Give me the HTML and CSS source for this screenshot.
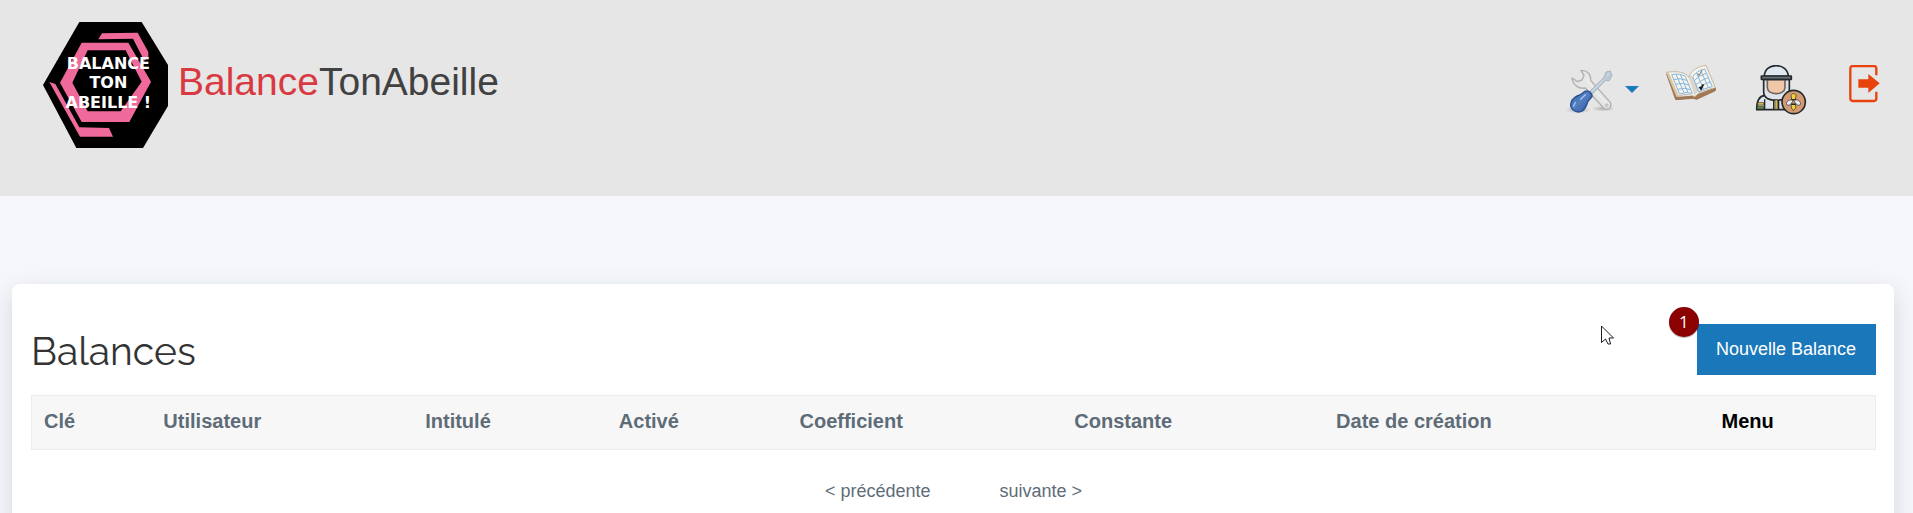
FILE: index.html
```
<!DOCTYPE html>
<html lang="fr">
<head>
<meta charset="utf-8">
<title>BalanceTonAbeille</title>
<link rel="stylesheet" href="styles.css">
</head>
<body>
<header class="topbar">
  <a class="brand" href="#">
    <svg class="brand-logo" viewBox="39 36 375 378" role="img" aria-label="Logo">
      <path d="M39 225 148 36H335L414 165V288L339 414H139Z" fill="#000"/>
      <path fill-rule="evenodd" d="M90 218 155 98H295L363 215 298 336H155ZM127 218 173 304H272L335 215 287 121H173Z" fill="#f0699b"/>
      <path d="M205 88 216 70 323 68 355 126V142L343 152 309 86ZM58 216 76 222 148 352 237 354 249 380H150Z" fill="#f0699b"/>
      <g class="logo-text">
        <text x="235" y="177">BALANCE</text>
        <text x="235" y="235">TON</text>
        <text x="235" y="294">ABEILLE !</text>
      </g>
    </svg>
    <span class="brand-name"><span class="brand-accent">Balance</span>TonAbeille</span>
  </a>
  <nav class="nav" aria-label="Navigation">
    <button class="nav-item tools" type="button" aria-label="Outils">
      <svg width="48" height="51" viewBox="45 45 144 153">
        <defs>
          <linearGradient id="handle" x1="0" y1="0" x2="1" y2="1"><stop offset="0" stop-color="#3465a8"/><stop offset=".45" stop-color="#5480c2"/><stop offset="1" stop-color="#2b549c"/></linearGradient>
          <radialGradient id="shade"><stop offset="0" stop-color="#999" stop-opacity=".7"/><stop offset="1" stop-color="#999" stop-opacity="0"/></radialGradient>
        </defs>
        <ellipse cx="84" cy="180" rx="40" ry="10" fill="url(#shade)"/>
        <ellipse cx="160" cy="176" rx="36" ry="9" fill="url(#shade)"/>
        <path d="M93 61C110 60 123 71 122 91L181 157C187 168 178 179 167 177L161 174 106 114C87 118 68 105 66 84L82 95 96 90 102 76Z" fill="#e6e6e5" stroke="#b0b0b0" stroke-width="4" stroke-linejoin="round"/>
        <path d="M111 84 116 97 168 160" fill="none" stroke="#f6f6f6" stroke-width="3"/>
        <circle cx="170" cy="166" r="4" fill="#e5e5e5" stroke="#999" stroke-width="2"/>
        <path d="M163 79 168 66 181 63 186 76 178 92 166 92 128 131 120 123 159 85Z" fill="#bdcad6" stroke="#a8b6c2" stroke-width="3" stroke-linejoin="round"/>
        <path d="M169 78 178 71M126 124 162 88" stroke="#dfe8ef" stroke-width="2"/>
        <path d="M105 124C112 119 128 130 126 140L114 154C111 159 110 174 97 183C81 192 57 178 63 159C65 145 81 137 90 135Z" fill="url(#handle)" stroke="#294f91" stroke-width="4"/>
        <path d="M106 134 92 148M76 157 71 169" stroke="#a9c4ea" stroke-width="4" stroke-linecap="round"/>
      </svg>
      <svg width="14" height="51" viewBox="225 45 42 153"><path d="M225 108H267L246 129Z" fill="#1a7bbf"/></svg>
    </button>
    <a class="nav-item" href="#" aria-label="Journal">
      <svg width="64" height="51" viewBox="345 45 192 153">
        <path d="M350 72 377 149 430 145 440 148 496 122 496 114 429 139 382 142Z" fill="#a47850" stroke="#9b7655" stroke-width="3"/>
        <path d="M349 67C374 64 401 62 417 82C423 60 448 48 468 46L496 113C474 119 447 122 435 141C420 129 397 133 380 140Z" fill="#f7f4ec" stroke="#ad9c84" stroke-width="2"/>
        <path d="M349 67 380 140 386 136 357 69Z" fill="#d9c6a3"/>
        <path d="M408 74C420 82 426 119 435 139C440 127 446 122 448 120L424 76 417 82Z" fill="#d0c8b9" opacity=".65"/>
        <path d="M365 74Q390 69 406 79L427 130Q408 124 389 132ZM428 80Q440 62 464 57L487 110Q462 114 446 126ZM370 89Q394 83 411 92M376 103Q400 97 417 106M383 118Q405 111 422 119M378 73 402 128M391 73 414 128M433 92Q446 76 469 70M438 104Q451 90 475 83M443 115Q457 103 481 96M440 69 461 119M452 61 475 113" fill="none" stroke="#84b6df" stroke-width="3"/>
        <path d="M443 70 447 77 456 61" fill="none" stroke="#777" stroke-width="3"/>
        <path d="M449 111 453 117 460 103" fill="none" stroke="#111" stroke-width="5"/>
      </svg>
    </a>
    <a class="nav-item" href="#" aria-label="Apiculteur">
      <svg width="67" height="51" viewBox="75 45 201 153" stroke="#24292d" stroke-width="5" stroke-linejoin="round">
        <path d="M80 179C80 154 85 138 104 136H173C191 137 194 154 194 179Z" fill="#dfe3ea"/>
        <path d="M101 88H178V129C171 148 156 151 139 151C119 151 100 145 101 124Z" fill="#dfe3ea"/>
        <path d="M112 89H165V113C164 124 153 131 139 131C124 131 113 124 112 113Z" fill="#f0c8a8" stroke="#70655f"/>
        <path d="M103 79C103 58 119 47 138 47S174 58 175 79Z" fill="#dfe7f1"/>
        <path d="M94 78H184V88H94Z" fill="#66717a"/>
        <path d="M104 148V178M131 150V178M146 150V178" fill="none" stroke-width="4"/>
        <path d="M83 158H101V165H83ZM135 149H142V178H135Z" fill="#f5c83c" stroke-width="2"/>
        <path d="M81 169H101V177H81Z" fill="#66963e" stroke-width="2"/>
        <circle cx="191" cy="156" r="35" fill="#d29b72"/>
        <path d="M187 149C174 149 166 158 171 165C180 169 186 158 189 151ZM194 149C207 149 215 158 210 165C201 169 195 158 192 151Z" fill="#e8edf3" stroke-width="2"/>
        <path d="M183 136C184 129 197 129 198 136L196 149H185ZM184 162H197V174L190 182 184 174Z" fill="#f4cf38" stroke-width="2"/>
        <path d="M184 149H197M184 163H197" stroke-width="4"/>
      </svg>
    </a>
    <a class="nav-item" href="#" aria-label="Déconnexion">
      <svg width="32" height="51" viewBox="354 45 96 153">
        <path d="M439 76V55Q439 48 432 48H368Q361 48 361 55V145Q361 153 368 153H432Q439 153 439 145V125" fill="none" stroke="#e8430d" stroke-width="7"/>
        <path d="M385 88H415V72L449 100 415 129V113H385Z" fill="#e8430d"/>
      </svg>
    </a>
  </nav>
</header>
<main class="card">
  <div class="card-head">
    <h1 class="title">Balances</h1>
    <div class="action">
      <button class="primary" type="button">Nouvelle Balance</button>
      <span class="step">1</span>
      <svg class="pointer" width="13" height="20" viewBox="0 0 13 20"><path d="M.5 1V17.500L4.500 14 7 19H9.500L8 13H12.500Z" fill="#fff" stroke="#1b1b25"/></svg>
    </div>
  </div>
  <table class="grid">
    <thead>
      <tr>
        <th class="col-key" scope="col">Clé</th>
        <th class="col-user" scope="col">Utilisateur</th>
        <th class="col-label" scope="col">Intitulé</th>
        <th class="col-active" scope="col">Activé</th>
        <th class="col-coef" scope="col">Coefficient</th>
        <th class="col-const" scope="col">Constante</th>
        <th class="col-date" scope="col">Date de création</th>
        <th class="col-menu" scope="col">Menu</th>
      </tr>
    </thead>
  </table>
  <nav class="pager" aria-label="Pagination">
    <a href="#">&lt; précédente</a>
    <a href="#">suivante &gt;</a>
  </nav>
</main>
</body>
</html>
```
FILE: styles.css
```
* { box-sizing: border-box; }

body {
  margin: 0;
  background: #f5f7fb;
  color: #5e6c78;
  font: 18px/27px "Liberation Sans", Arial, sans-serif;
  overflow: hidden;
}

a { color: inherit; text-decoration: none; }

.topbar {
  display: flex;
  justify-content: space-between;
  align-items: flex-start;
  padding: 22px 33px 48px 43px;
  background: #e6e6e6;
}

.brand {
  display: flex;
  align-items: flex-start;
  gap: 10px;
  color: #414141;
}

.brand-logo { width: 125px; height: 126px; }

.logo-text {
  fill: #fff;
  font: bold 48px "DejaVu Sans", sans-serif;
  text-anchor: middle;
}

.brand-name {
  padding-top: 37px;
  font-size: 39px;
  line-height: 46px;
}

.brand-accent { color: #d93a41; }

.nav {
  display: flex;
  gap: 26px;
  padding-top: 43px;
}

.nav-item { display: flex; }
.nav-item svg { display: block; }

.tools {
  gap: 12px;
  padding: 0;
  border: 0;
  background: none;
}

.card {
  margin: 88px 19px 0 12px;
  padding: 40px 18px 30px 19px;
  background: #fff;
  border-radius: 8px;
  box-shadow: 0 8px 24px rgba(60, 65, 80, .18);
}

.card-head {
  display: flex;
  justify-content: space-between;
  align-items: flex-start;
  margin-bottom: 20px;
}

.title {
  margin: 0;
  padding-top: 3px;
  color: #333;
  font: 400 39px/48px Raleway, "Open Sans", sans-serif;
}

.action { position: relative; }

.primary {
  display: block;
  height: 51px;
  padding: 0 20px 0 19px;
  border: 0;
  background: #1a78ba;
  color: #fff;
  font: inherit;
}

.step {
  position: absolute;
  top: -17px;
  left: -28px;
  width: 30px;
  border-radius: 50%;
  background: #8b0000;
  box-shadow: 0 1px 1px rgba(0, 0, 0, .3);
  color: #fff;
  font: 17px/30px "Open Sans", sans-serif;
  text-align: center;
}

.pointer {
  position: absolute;
  top: 1px;
  left: -96px;
}

.grid {
  width: 100%;
  table-layout: fixed;
  border-collapse: collapse;
  border: 1px solid #ececec;
  background: #f7f7f7;
  font-size: 20px;
  line-height: 30px;
}

.grid th {
  padding: 10px 12px 13px;
  text-align: left;
}

.col-key { width: 6.5%; }
.col-user { width: 14.2%; }
.col-label { width: 10.5%; }
.col-active { width: 9.8%; }
.col-coef { width: 14.9%; }
.col-const { width: 14.2%; }
.col-date { width: 20.9%; }
.col-menu { color: #000; }

.pager {
  display: flex;
  justify-content: center;
  gap: 69px;
  padding-top: 28px;
}
```
